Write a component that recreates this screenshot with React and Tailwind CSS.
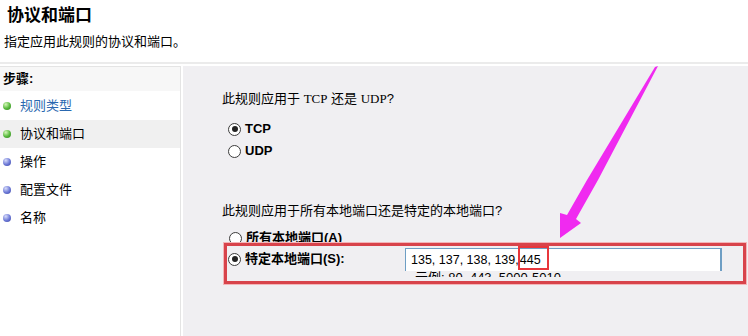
import React from 'react';

const steps = [
  { label: '规则类型', done: true, link: true },
  { label: '协议和端口', done: true, active: true },
  { label: '操作' },
  { label: '配置文件' },
  { label: '名称' },
];

function Bullet({ done }) {
  return (
    <span
      className={
        done
          ? 'w-[8px] h-[8px] rounded-full bg-[radial-gradient(circle_at_35%_30%,#d4f7b8,#55b83a_55%,#2f7d1f)]'
          : 'w-[8px] h-[8px] rounded-full bg-[radial-gradient(circle_at_35%_30%,#d8dcfa,#6b78d6_55%,#3b44a0)]'
      }
    />
  );
}

function Radio({ checked }) {
  return (
    <span className="w-[13px] h-[13px] rounded-full border border-[#3c3c3c] bg-white flex items-center justify-center shrink-0">
      {checked && <span className="w-[6px] h-[6px] rounded-full bg-[#222]" />}
    </span>
  );
}

export default function App() {
  return (
    <div className="relative w-[748px] h-[336px] overflow-hidden bg-white text-black font-['Liberation_Sans','Noto_Sans_CJK_SC',sans-serif]">
      {/* header */}
      <div className="h-[62px] pt-[6px]">
        <div className="pl-[7px] text-[17px] leading-[20px] font-bold">协议和端口</div>
        <div className="pl-[4px] mt-[8px] text-[13px] leading-[16px]">指定应用此规则的协议和端口。</div>
      </div>
      <div className="h-[2px] bg-[#ebebeb]" />
      <div className="h-[2px]" />

      <div className="flex h-[270px]">
        {/* steps */}
        <div className="w-[181px] border-t border-r border-[#e4e4e4]">
          <div className="h-[24px] bg-[#f7f7f7] flex items-center pl-[3px] text-[13px] font-bold">步骤:</div>
          <div className="pt-[1px]">
            {steps.map((s) => (
              <div
                key={s.label}
                className={`h-[28px] flex items-center gap-[9px] pl-[3px] text-[13px] ${s.active ? 'bg-[#f0f0f0]' : ''} ${s.link ? 'text-[#2a68b0]' : ''}`}
              >
                <Bullet done={s.done} />
                <span>{s.label}</span>
              </div>
            ))}
          </div>
        </div>

        {/* content */}
        <div className="flex-1 ml-[2px] bg-[#f0eff2] pl-[39px] pt-[25px] text-[13px]">
          <div className="leading-[16px]">
            此规则应用于 <span className="font-['Liberation_Serif',serif]">TCP</span> 还是 <span className="font-['Liberation_Serif',serif]">UDP</span>?
          </div>
          <div className="mt-[14px] pl-[6px] flex items-center gap-[4px] h-[16px] font-bold">
            <Radio checked />
            <span>TCP</span>
          </div>
          <div className="mt-[6px] pl-[6px] flex items-center gap-[4px] h-[16px] font-bold">
            <Radio />
            <span>UDP</span>
          </div>
          <div className="mt-[44px] leading-[16px]">此规则应用于所有本地端口还是特定的本地端口?</div>
          <div className="mt-[11px] pl-[7px] flex items-center gap-[4px] h-[16px] font-bold">
            <Radio />
            <span>所有本地端口(A)</span>
          </div>

          <div className="relative z-10 -mt-[3px] ml-[2px] w-[522px] h-[41px] border-[3px] border-[#d8434b] shadow-[0_0_0_1px_#f3b5b8] flex">
            <div className="w-[178px] pl-[1px] pt-[5px] flex items-start gap-[4px] font-bold">
              <span className="h-[16px] flex items-center"><Radio checked /></span>
              <span className="leading-[16px]">特定本地端口(S):</span>
            </div>
            <div className="pt-[2px]">
              <div className="relative w-[317px] h-[23px] bg-white border-t border-l border-r-2 border-[#6e9ec4] border-b-[#e8eef4] pl-[5px] leading-[23px] text-[12.5px]">
                135, 137, 138, 139,<span className="relative inline-block ml-[1px]">
                  445
                  <span className="absolute -left-[2px] -right-[8px] -top-[3px] bottom-[2px] border-2 border-[#e8373c]" />
                </span>
              </div>
              <div className="h-[6px] overflow-hidden pl-[10px] text-[13px] leading-[14px]">示例: 80, 443, 5000-5010</div>
            </div>
          </div>
        </div>
      </div>

      {/* annotation arrow */}
      <svg className="absolute inset-0 pointer-events-none z-20" width="748" height="336" viewBox="0 0 748 336">
        <polygon
          points="658,66 598,180 576,219 581,223 560,238 560,213 567,215 587,180 655,67"
          fill="#f02af0"
        />
      </svg>
    </div>
  );
}
